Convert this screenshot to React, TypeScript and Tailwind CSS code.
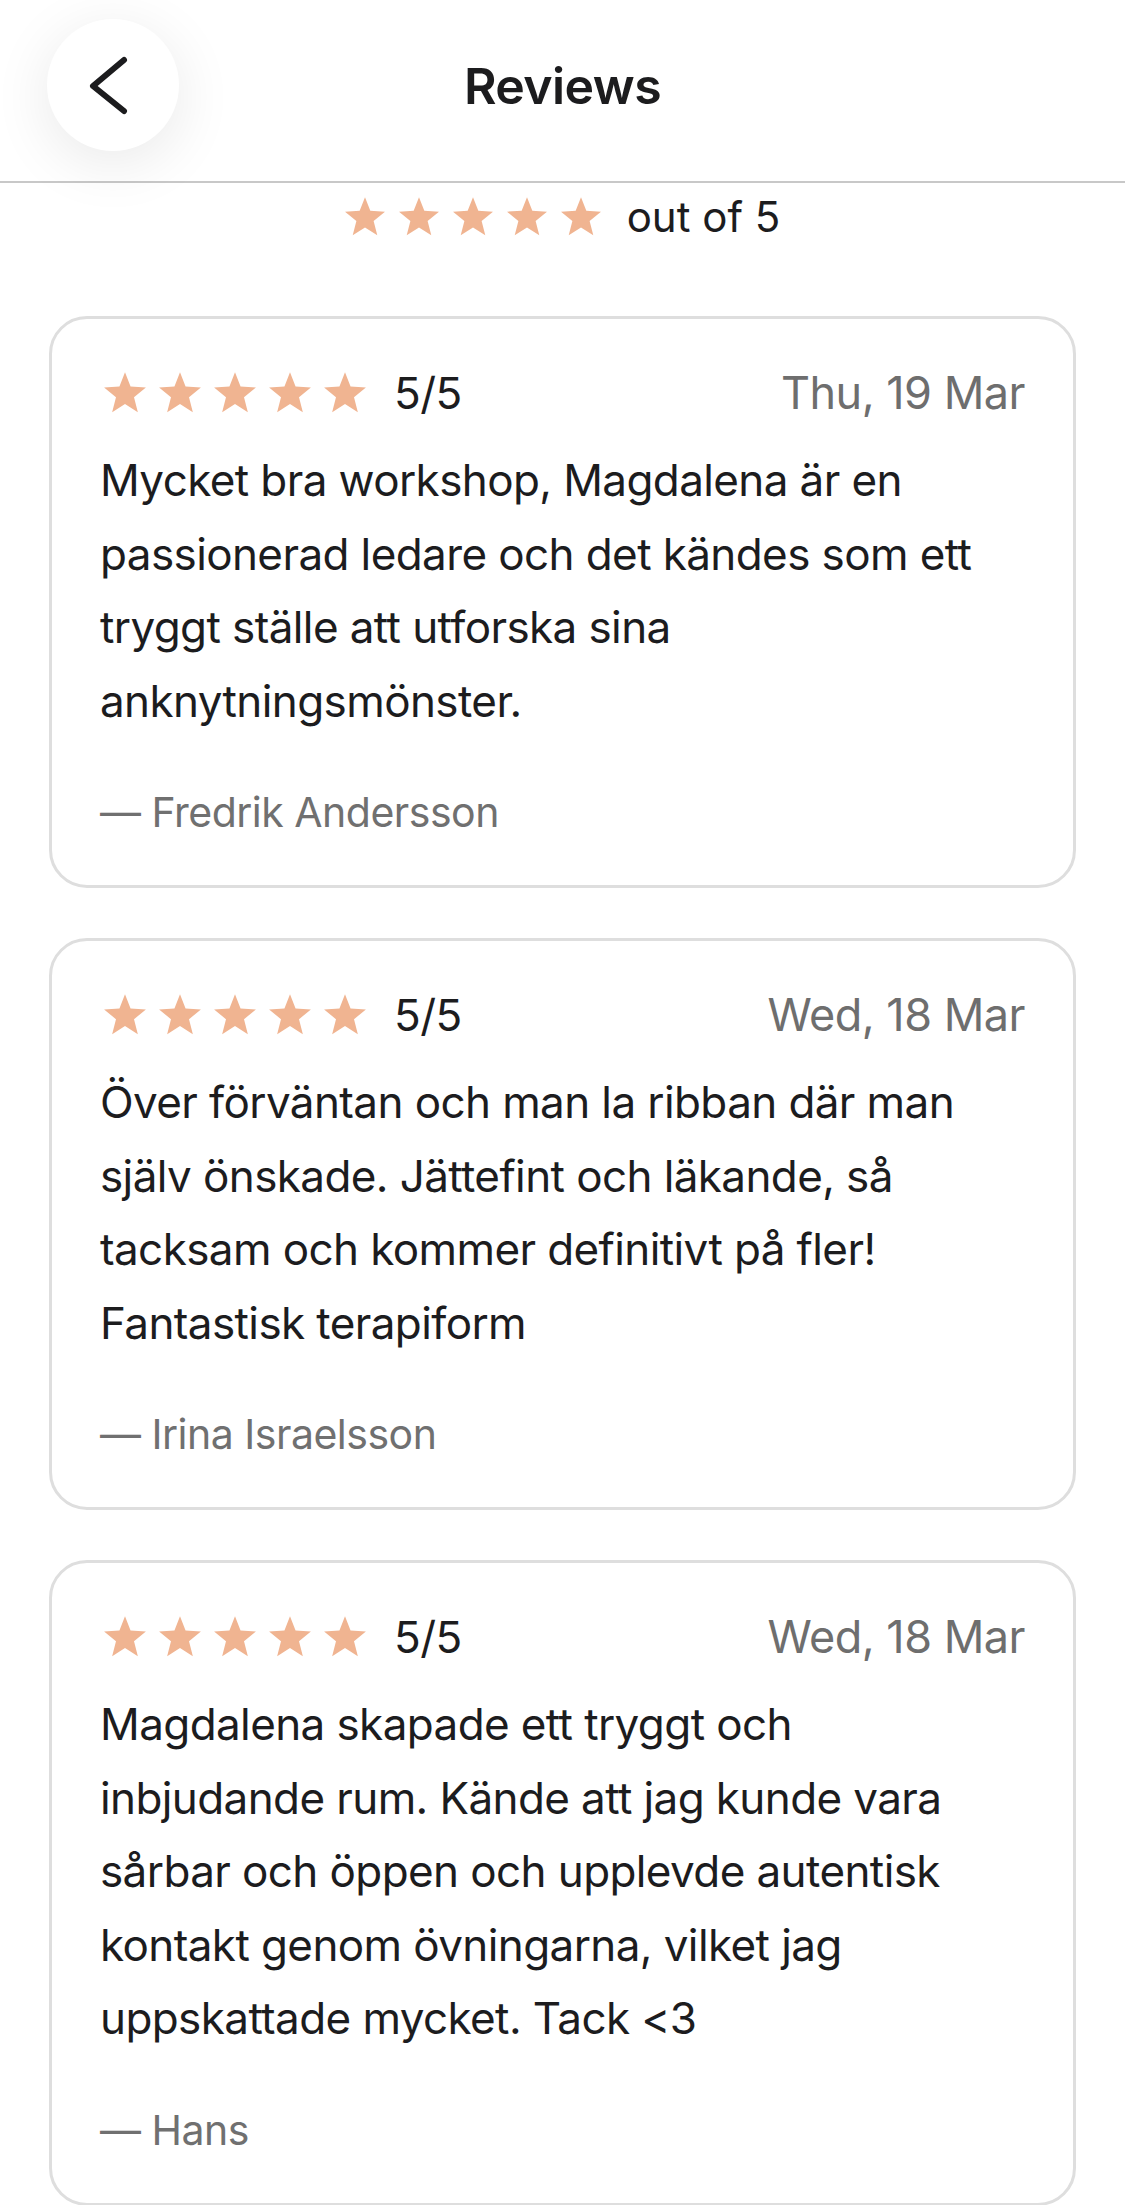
import React from "react";

const Star = ({ size }: { size: number }) => (
  <svg width={size} height={size} viewBox="0 0 24 24" className="shrink-0">
    <polygon
      points="12,1.2 14.9,8.6 22.9,9.1 16.7,14.2 18.7,22 12,17.7 5.3,22 7.3,14.2 1.1,9.1 9.1,8.6"
      fill="#f0b491"
    />
  </svg>
);

const reviews = [
  {
    date: "Thu, 19 Mar",
    text: "Mycket bra workshop, Magdalena är en passionerad ledare och det kändes som ett tryggt ställe att utforska sina anknytningsmönster.",
    author: "Fredrik Andersson",
  },
  {
    date: "Wed, 18 Mar",
    text: "Över förväntan och man la ribban där man själv önskade. Jättefint och läkande, så tacksam och kommer definitivt på fler! Fantastisk terapiform",
    author: "Irina Israelsson",
  },
  {
    date: "Wed, 18 Mar",
    text: "Magdalena skapade ett tryggt och inbjudande rum. Kände att jag kunde vara sårbar och öppen och upplevde autentisk kontakt genom övningarna, vilket jag uppskattade mycket. Tack <3",
    author: "Hans",
  },
];

export default function App() {
  return (
    <div className="w-[1125px] min-h-[2205px] bg-white font-['Inter','Liberation_Sans',sans-serif] overflow-hidden">
      <header className="relative h-[183px] border-b-[2px] border-[#c8c8c8] bg-white flex items-start">
        <button className="relative z-10 ml-[47px] mt-[19px] w-[132px] h-[132px] rounded-full bg-white shadow-[0_12px_60px_rgba(0,0,0,0.09)] flex items-center justify-center">
          <svg width="132" height="132" viewBox="0 0 132 132">
            <polyline
              points="77,41 46,67 77,92"
              fill="none"
              stroke="#1c1c1e"
              strokeWidth="6"
              strokeLinecap="round"
              strokeLinejoin="round"
            />
          </svg>
        </button>
        <h1 className="absolute inset-x-0 top-[56px] text-center text-[50px] leading-[60px] font-semibold text-[#1c1c1e] tracking-[-0.6px]">
          Reviews
        </h1>
      </header>

      <div className="flex items-center justify-center pt-[13px] h-[55px] ml-[-2px]">
        <div className="flex items-center gap-[10px]">
          {[0, 1, 2, 3, 4].map((i) => (
            <Star key={i} size={44} />
          ))}
        </div>
        <span className="ml-[24px] text-[42px] leading-[50px] text-[#1c1c1e]">out of 5</span>
      </div>

      <div className="flex flex-col gap-[50px] px-[49px] pt-[78px] pb-[4px]">
        {reviews.map((r, idx) => (
          <div
            key={idx}
            className="rounded-[38px] border-[3px] border-[#dedede] px-[48px] pt-[48px] pb-[44px]"
          >
            <div className="flex items-center h-[52px]">
              <div className="flex items-center gap-[9px] ml-[2px]">
                {[0, 1, 2, 3, 4].map((i) => (
                  <Star key={i} size={46} />
                ))}
              </div>
              <span className="ml-[26px] text-[44px] leading-[52px] tracking-[-0.5px] text-[#1c1c1e]">5/5</span>
              <span className="ml-auto text-[45px] leading-[52px] tracking-[-0.5px] text-[#6e6e6e]">{r.date}</span>
            </div>
            <p className="mt-[25px] text-[44px] leading-[73.5px] tracking-[-0.6px] text-[#1c1c1e]">{r.text}</p>
            <p className="mt-[45px] text-[41px] leading-[58px] tracking-[-0.5px] text-[#707070]">— {r.author}</p>
          </div>
        ))}
      </div>
    </div>
  );
}
